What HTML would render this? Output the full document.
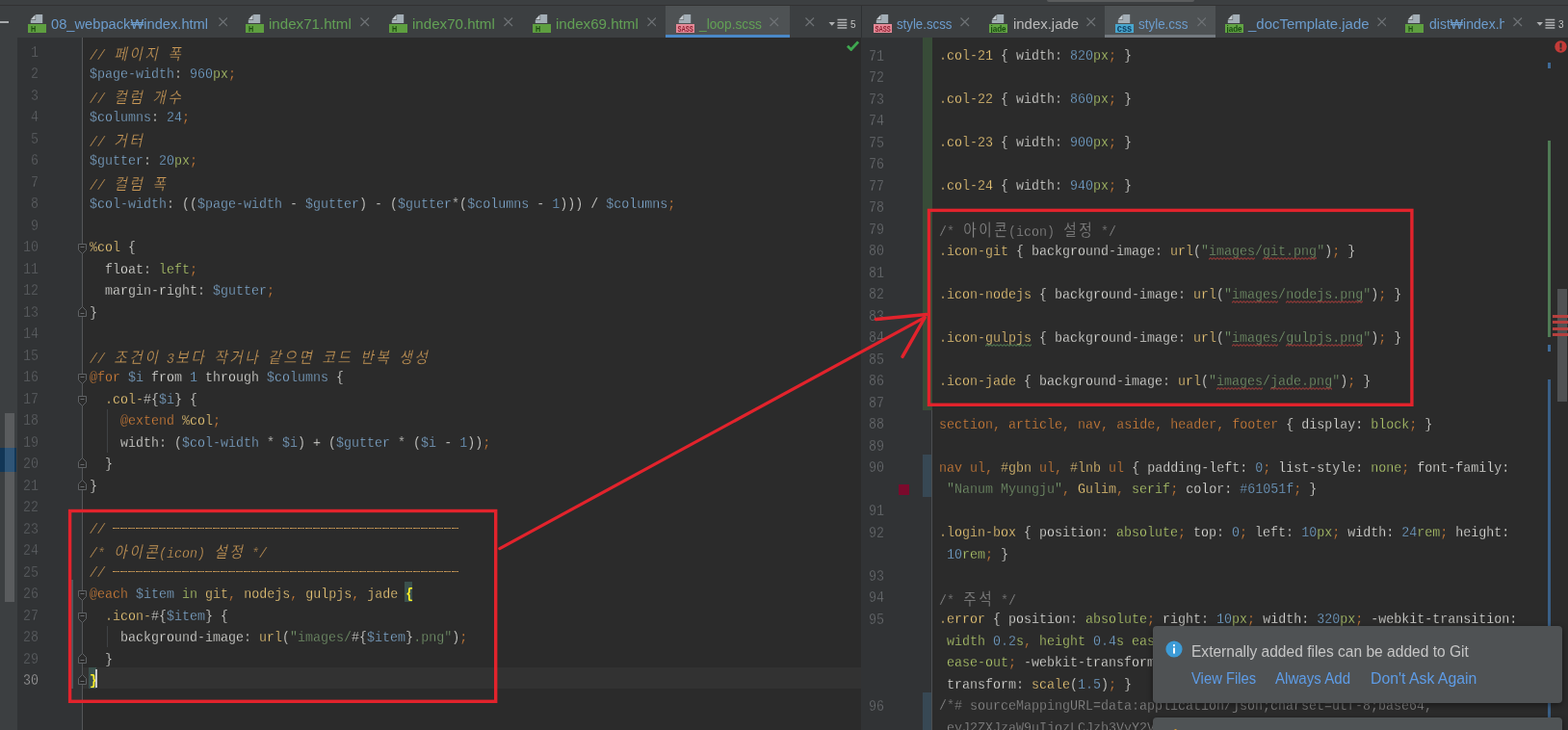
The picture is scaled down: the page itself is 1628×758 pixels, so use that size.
<!DOCTYPE html>
<html lang="ko"><head><meta charset="utf-8"><title>_loop.scss</title><style>
*{box-sizing:border-box}
html,body{margin:0;padding:0}
body{width:1628px;height:758px;overflow:hidden;position:relative;background:#2b2b2b;font-family:"Liberation Sans",sans-serif;font-size:15px;color:#bbb}
.abs{position:absolute}
#root{position:absolute;left:0;top:0;width:1628px;height:758px;will-change:transform}
#top{left:0;top:0;width:1628px;height:6px;background:#3c3f41;border-bottom:1px solid #323232}
.tabbar{top:6px;height:33px;background:#3c3f41}
.tab{position:absolute;top:0;height:33px;white-space:nowrap;line-height:33px}
.tab .t{position:absolute;top:0;line-height:38px;font-size:15px}
.tab .x{position:absolute;top:12px;width:10px;height:10px}
.tt{overflow:visible}
.blue{color:#6c9ccc}.green{color:#62a055}.wh{color:#bbbbbb}
.ed{background:#2b2b2b;overflow:hidden}
.gut{background:#313335}
.ln{position:absolute;color:#6c6f72;-webkit-text-stroke:0.35px #313335;font-family:"Liberation Mono",monospace;font-size:15px;line-height:22.5px;height:22.5px;text-align:right;transform:scale(0.8889,1.1);transform-origin:100% 60%;white-space:pre}
.cl{position:absolute;color:#e2e2de;-webkit-text-stroke:0.28px #2b2b2b;font-family:"Liberation Mono",monospace;font-size:15.0px;line-height:22.5px;height:22.5px;white-space:pre;transform:scaleX(0.8889);transform-origin:0 0}
.c{color:#c89857;font-style:italic}
.cg{color:#8c8c8c}
.dl{color:transparent;background:repeating-linear-gradient(90deg,#c89857 0,#c89857 7.875px,transparent 7.875px,transparent 9.000px) 0 6.2px/100% 1.2px no-repeat}
.v{color:#80aacf}.n{color:#74a3cc}.u{color:#b4cc6e}.p{color:#d4813a}.s{color:#f0cc7a}.k{color:#d4813a}.g{color:#b4cc6e}
.st{color:#76966c}.f{color:#f0cc7a}
.bh{color:#ffef28;font-weight:bold;-webkit-text-stroke:0}
.w,.wg{position:relative}
.zz{position:absolute;left:0;bottom:-0.5px;width:100%;height:3px}
.hg{display:inline-block;width:18px;text-align:center;font-family:"Liberation Sans","Noto Sans CJK KR",sans-serif;font-size:16.5px;font-style:normal;vertical-align:baseline;overflow:visible}
.hg.i{font-style:italic}
</style></head><body><div id="root">
<svg width="0" height="0" style="position:absolute"><defs>
<pattern id="zr" width="4" height="3" patternUnits="userSpaceOnUse"><path d="M0 2.4L2 0.6L4 2.4" stroke="#c0403c" stroke-width="1" fill="none"/></pattern>
<pattern id="zg" width="4" height="3" patternUnits="userSpaceOnUse"><path d="M0 2.4L2 0.6L4 2.4" stroke="#5f9460" stroke-width="1" fill="none"/></pattern>
</defs></svg>
<div id="top" class="abs"></div>
<div class="abs" style="left:1087px;top:0;width:153px;height:1.6px;background:#5a5c5d;border-radius:0 0 2px 2px"></div>
<div class="abs tabbar" style="left:0;width:894px">
<div class="abs" style="left:0;top:15.5px;width:8.5px;height:2px;background:#a8abad"></div>
<div class="abs" style="left:691px;top:0;width:128.5px;height:33px;background:#4e5254;border-bottom:3px solid #4a88c7"></div>
<div class="abs" style="left:29.0px;top:9px;width:19px;height:19px"><svg width="19" height="19" viewBox="0 0 19 19"><path d="M8.1 0H15.2V9H2.8V5.7H8.1Z" fill="#a3aeb6"/><path d="M7.6 0.3V5.2H2.9Z" fill="#c4cbd0"/><rect x="0" y="10" width="19" height="9" fill="#5e9f40"/><text x="2.9" y="17.8" font-family="Liberation Sans, sans-serif" font-weight="bold" font-size="8.8" fill="#1c4a12" textLength="5.2" lengthAdjust="spacingAndGlyphs">H</text></svg></div>
<svg class="abs tt" style="left:53.1px;top:8.6px" width="165.1" height="22" viewBox="0 0 165.1 22"><text x="0" y="15.4" font-family="Liberation Sans, sans-serif" font-size="15" fill="#6c9ccc" textLength="163.1" lengthAdjust="spacingAndGlyphs">08_webpack₩index.html</text></svg>
<svg class="abs" style="left:226.7px;top:12.4px" width="9.5" height="9.5" viewBox="0 0 10 10"><path d="M0.5 0.5L9.5 9.5M9.5 0.5L0.5 9.5" stroke="#6e7275" stroke-width="1.25" fill="none"/></svg>
<div class="abs" style="left:255.0px;top:9px;width:19px;height:19px"><svg width="19" height="19" viewBox="0 0 19 19"><path d="M8.1 0H15.2V9H2.8V5.7H8.1Z" fill="#a3aeb6"/><path d="M7.6 0.3V5.2H2.9Z" fill="#c4cbd0"/><rect x="0" y="10" width="19" height="9" fill="#5e9f40"/><text x="2.9" y="17.8" font-family="Liberation Sans, sans-serif" font-weight="bold" font-size="8.8" fill="#1c4a12" textLength="5.2" lengthAdjust="spacingAndGlyphs">H</text></svg></div>
<svg class="abs tt" style="left:279.2px;top:8.6px" width="87.8" height="22" viewBox="0 0 87.8 22"><text x="0" y="15.4" font-family="Liberation Sans, sans-serif" font-size="15" fill="#62a055" textLength="85.8" lengthAdjust="spacingAndGlyphs">index71.html</text></svg>
<svg class="abs" style="left:374.3px;top:12.4px" width="9.5" height="9.5" viewBox="0 0 10 10"><path d="M0.5 0.5L9.5 9.5M9.5 0.5L0.5 9.5" stroke="#6e7275" stroke-width="1.25" fill="none"/></svg>
<div class="abs" style="left:404.0px;top:9px;width:19px;height:19px"><svg width="19" height="19" viewBox="0 0 19 19"><path d="M8.1 0H15.2V9H2.8V5.7H8.1Z" fill="#a3aeb6"/><path d="M7.6 0.3V5.2H2.9Z" fill="#c4cbd0"/><rect x="0" y="10" width="19" height="9" fill="#5e9f40"/><text x="2.9" y="17.8" font-family="Liberation Sans, sans-serif" font-weight="bold" font-size="8.8" fill="#1c4a12" textLength="5.2" lengthAdjust="spacingAndGlyphs">H</text></svg></div>
<svg class="abs tt" style="left:428.2px;top:8.6px" width="87.8" height="22" viewBox="0 0 87.8 22"><text x="0" y="15.4" font-family="Liberation Sans, sans-serif" font-size="15" fill="#62a055" textLength="85.8" lengthAdjust="spacingAndGlyphs">index70.html</text></svg>
<svg class="abs" style="left:523.4px;top:12.4px" width="9.5" height="9.5" viewBox="0 0 10 10"><path d="M0.5 0.5L9.5 9.5M9.5 0.5L0.5 9.5" stroke="#6e7275" stroke-width="1.25" fill="none"/></svg>
<div class="abs" style="left:553.0px;top:9px;width:19px;height:19px"><svg width="19" height="19" viewBox="0 0 19 19"><path d="M8.1 0H15.2V9H2.8V5.7H8.1Z" fill="#a3aeb6"/><path d="M7.6 0.3V5.2H2.9Z" fill="#c4cbd0"/><rect x="0" y="10" width="19" height="9" fill="#5e9f40"/><text x="2.9" y="17.8" font-family="Liberation Sans, sans-serif" font-weight="bold" font-size="8.8" fill="#1c4a12" textLength="5.2" lengthAdjust="spacingAndGlyphs">H</text></svg></div>
<svg class="abs tt" style="left:577.4px;top:8.6px" width="87.8" height="22" viewBox="0 0 87.8 22"><text x="0" y="15.4" font-family="Liberation Sans, sans-serif" font-size="15" fill="#62a055" textLength="85.8" lengthAdjust="spacingAndGlyphs">index69.html</text></svg>
<svg class="abs" style="left:671.9px;top:12.4px" width="9.5" height="9.5" viewBox="0 0 10 10"><path d="M0.5 0.5L9.5 9.5M9.5 0.5L0.5 9.5" stroke="#6e7275" stroke-width="1.25" fill="none"/></svg>
<div class="abs" style="left:702.1px;top:9px;width:19px;height:19px"><svg width="19" height="19" viewBox="0 0 19 19"><path d="M8.1 0H15.2V9H2.8V5.7H8.1Z" fill="#a3aeb6"/><path d="M7.6 0.3V5.2H2.9Z" fill="#c4cbd0"/><rect x="0" y="10" width="19" height="9" fill="#e58a97"/><text x="1.4" y="17.8" font-family="Liberation Sans, sans-serif" font-weight="bold" font-size="8.2" fill="#8a1a2c" textLength="16.4" lengthAdjust="spacingAndGlyphs">SASS</text></svg></div>
<svg class="abs tt" style="left:726.2px;top:8.6px" width="67.0" height="22" viewBox="0 0 67.0 22"><text x="0" y="15.4" font-family="Liberation Sans, sans-serif" font-size="15" fill="#62a055" textLength="65.0" lengthAdjust="spacingAndGlyphs">_loop.scss</text></svg>
<svg class="abs" style="left:799.3px;top:12.4px" width="9.5" height="9.5" viewBox="0 0 10 10"><path d="M0.5 0.5L9.5 9.5M9.5 0.5L0.5 9.5" stroke="#6e7275" stroke-width="1.25" fill="none"/></svg>
<svg class="abs" style="left:836.4px;top:12.4px" width="9.5" height="9.5" viewBox="0 0 10 10"><path d="M0.5 0.5L9.5 9.5M9.5 0.5L0.5 9.5" stroke="#6e7275" stroke-width="1.25" fill="none"/></svg>
<svg class="abs" style="left:859.5px;top:11.6px" width="34" height="14" viewBox="0 0 34 14"><path d="M0.5 5H7L3.8 8.8Z" fill="#afb1b3"/><path d="M9.5 2.6H19.3M9.5 5.4H19.3M9.5 8.2H19.3M9.5 11H19.3" stroke="#afb1b3" stroke-width="1.5"/><text x="23" y="11.2" font-family="Liberation Sans, sans-serif" font-size="10" fill="#c4c4c4">5</text></svg>
</div>
<div class="abs tabbar" style="left:894px;width:734px">
<div class="abs" style="left:252.5px;top:0;width:115px;height:33px;background:#4e5254;border-bottom:3px solid #747a80"></div>
<div class="abs" style="left:13.0px;top:9px;width:19px;height:19px"><svg width="19" height="19" viewBox="0 0 19 19"><path d="M8.1 0H15.2V9H2.8V5.7H8.1Z" fill="#a3aeb6"/><path d="M7.6 0.3V5.2H2.9Z" fill="#c4cbd0"/><rect x="0" y="10" width="19" height="9" fill="#e58a97"/><text x="1.4" y="17.8" font-family="Liberation Sans, sans-serif" font-weight="bold" font-size="8.2" fill="#8a1a2c" textLength="16.4" lengthAdjust="spacingAndGlyphs">SASS</text></svg></div>
<svg class="abs tt" style="left:37.4px;top:8.6px" width="59.4" height="22" viewBox="0 0 59.4 22"><text x="0" y="15.4" font-family="Liberation Sans, sans-serif" font-size="15" fill="#6c9ccc" textLength="57.4" lengthAdjust="spacingAndGlyphs">style.scss</text></svg>
<svg class="abs" style="left:103.3px;top:12.4px" width="9.5" height="9.5" viewBox="0 0 10 10"><path d="M0.5 0.5L9.5 9.5M9.5 0.5L0.5 9.5" stroke="#6e7275" stroke-width="1.25" fill="none"/></svg>
<div class="abs" style="left:133.0px;top:9px;width:19px;height:19px"><svg width="19" height="19" viewBox="0 0 19 19"><path d="M8.1 0H15.2V9H2.8V5.7H8.1Z" fill="#a3aeb6"/><path d="M7.6 0.3V5.2H2.9Z" fill="#c4cbd0"/><rect x="0" y="10" width="19" height="9" fill="#62a444"/><text x="1.4" y="17.8" font-family="Liberation Sans, sans-serif" font-weight="bold" font-size="9.6" fill="#174a10" textLength="16.2" lengthAdjust="spacingAndGlyphs">jade</text></svg></div>
<svg class="abs tt" style="left:157.5px;top:8.6px" width="70.1" height="22" viewBox="0 0 70.1 22"><text x="0" y="15.4" font-family="Liberation Sans, sans-serif" font-size="15" fill="#bbbbbb" textLength="68.1" lengthAdjust="spacingAndGlyphs">index.jade</text></svg>
<svg class="abs" style="left:234.2px;top:12.4px" width="9.5" height="9.5" viewBox="0 0 10 10"><path d="M0.5 0.5L9.5 9.5M9.5 0.5L0.5 9.5" stroke="#6e7275" stroke-width="1.25" fill="none"/></svg>
<div class="abs" style="left:264.0px;top:9px;width:19px;height:19px"><svg width="19" height="19" viewBox="0 0 19 19"><path d="M8.1 0H15.2V9H2.8V5.7H8.1Z" fill="#a3aeb6"/><path d="M7.6 0.3V5.2H2.9Z" fill="#c4cbd0"/><rect x="0" y="10" width="19" height="9" fill="#49a7cf"/><text x="1.8" y="17.8" font-family="Liberation Sans, sans-serif" font-weight="bold" font-size="10.4" fill="#0d3b5e" textLength="15.4" lengthAdjust="spacingAndGlyphs">css</text></svg></div>
<svg class="abs tt" style="left:288.3px;top:8.6px" width="53.5" height="22" viewBox="0 0 53.5 22"><text x="0" y="15.4" font-family="Liberation Sans, sans-serif" font-size="15" fill="#6c9ccc" textLength="51.5" lengthAdjust="spacingAndGlyphs">style.css</text></svg>
<svg class="abs" style="left:348.6px;top:12.4px" width="9.5" height="9.5" viewBox="0 0 10 10"><path d="M0.5 0.5L9.5 9.5M9.5 0.5L0.5 9.5" stroke="#6e7275" stroke-width="1.25" fill="none"/></svg>
<div class="abs" style="left:377.7px;top:9px;width:19px;height:19px"><svg width="19" height="19" viewBox="0 0 19 19"><path d="M8.1 0H15.2V9H2.8V5.7H8.1Z" fill="#a3aeb6"/><path d="M7.6 0.3V5.2H2.9Z" fill="#c4cbd0"/><rect x="0" y="10" width="19" height="9" fill="#62a444"/><text x="1.4" y="17.8" font-family="Liberation Sans, sans-serif" font-weight="bold" font-size="9.6" fill="#174a10" textLength="16.2" lengthAdjust="spacingAndGlyphs">jade</text></svg></div>
<svg class="abs tt" style="left:402.0px;top:8.6px" width="127.6" height="22" viewBox="0 0 127.6 22"><text x="0" y="15.4" font-family="Liberation Sans, sans-serif" font-size="15" fill="#6c9ccc" textLength="125.6" lengthAdjust="spacingAndGlyphs">_docTemplate.jade</text></svg>
<svg class="abs" style="left:535.6px;top:12.4px" width="9.5" height="9.5" viewBox="0 0 10 10"><path d="M0.5 0.5L9.5 9.5M9.5 0.5L0.5 9.5" stroke="#6e7275" stroke-width="1.25" fill="none"/></svg>
<div class="abs" style="left:565.2px;top:9px;width:19px;height:19px"><svg width="19" height="19" viewBox="0 0 19 19"><path d="M8.1 0H15.2V9H2.8V5.7H8.1Z" fill="#a3aeb6"/><path d="M7.6 0.3V5.2H2.9Z" fill="#c4cbd0"/><rect x="0" y="10" width="19" height="9" fill="#5e9f40"/><text x="2.9" y="17.8" font-family="Liberation Sans, sans-serif" font-weight="bold" font-size="8.8" fill="#1c4a12" textLength="5.2" lengthAdjust="spacingAndGlyphs">H</text></svg></div>
<div class="abs" style="left:589.0px;top:0;width:79.4px;height:33px;overflow:hidden"><svg class="abs tt" style="left:0.6px;top:8.6px" width="101.1" height="22" viewBox="0 0 101.1 22"><text x="0" y="15.4" font-family="Liberation Sans, sans-serif" font-size="15" fill="#6c9ccc" textLength="99.1" lengthAdjust="spacingAndGlyphs">dist₩index.html</text></svg></div>
<svg class="abs" style="left:677.3px;top:12.4px" width="9.5" height="9.5" viewBox="0 0 10 10"><path d="M0.5 0.5L9.5 9.5M9.5 0.5L0.5 9.5" stroke="#6e7275" stroke-width="1.25" fill="none"/></svg>
<svg class="abs" style="left:700.5px;top:11.6px" width="34" height="14" viewBox="0 0 34 14"><path d="M0.5 5H7L3.8 8.8Z" fill="#afb1b3"/><path d="M9.5 2.6H19.3M9.5 5.4H19.3M9.5 8.2H19.3M9.5 11H19.3" stroke="#afb1b3" stroke-width="1.5"/><text x="23" y="11.2" font-family="Liberation Sans, sans-serif" font-size="10" fill="#c4c4c4">3</text></svg>
</div>
<div class="abs" style="left:893.5px;top:6px;width:1px;height:33px;background:#2e3032"></div>
<div class="abs ed" style="left:0;top:39px;width:894px;height:719px">
<div class="abs" style="left:0;top:0;width:18px;height:719px;background:#3c3f41"></div>
<div class="abs" style="left:5px;top:390px;width:10px;height:196px;background:#5a5c5e"></div>
<div class="abs" style="left:0;top:426px;width:17px;height:25px;background:#123656"></div>
<div class="abs" style="left:5px;top:426px;width:10px;height:25px;background:#2f5577"></div>
<div class="abs gut" style="left:18px;top:0;width:68px;height:719px;border-right:1px solid #555759"></div>
<div class="abs" style="left:86px;top:654.10px;width:808px;height:22.00px;background:#323232"></div>
<div class="abs" style="left:92.0px;top:654.10px;width:7.6px;height:21.6px;background:#3b514d"></div>
<div class="abs" style="left:420.2px;top:564.50px;width:8px;height:21.4px;background:#3b514d"></div>
<div class="abs" style="left:74.3px;top:563px;width:2px;height:112.8px;background:#4b5b60"></div>
<div class="ln" style="right:854px;top:5.95px;color:#606366">1</div>
<div class="cl" style="left:92.6px;top:5.65px"><span class="c">// <span class="hg i">페</span><span class="hg i">이</span><span class="hg i">지</span> <span class="hg i">폭</span></span></div>
<div class="ln" style="right:854px;top:28.45px;color:#606366">2</div>
<div class="cl" style="left:92.6px;top:28.15px"><span class="v">$page-width</span>: <span class="n">960</span><span class="u">px</span><span class="p">;</span></div>
<div class="ln" style="right:854px;top:50.95px;color:#606366">3</div>
<div class="cl" style="left:92.6px;top:50.65px"><span class="c">// <span class="hg i">컬</span><span class="hg i">럼</span> <span class="hg i">개</span><span class="hg i">수</span></span></div>
<div class="ln" style="right:854px;top:73.45px;color:#606366">4</div>
<div class="cl" style="left:92.6px;top:73.15px"><span class="v">$columns</span>: <span class="n">24</span><span class="p">;</span></div>
<div class="ln" style="right:854px;top:95.95px;color:#606366">5</div>
<div class="cl" style="left:92.6px;top:95.65px"><span class="c">// <span class="hg i">거</span><span class="hg i">터</span></span></div>
<div class="ln" style="right:854px;top:118.45px;color:#606366">6</div>
<div class="cl" style="left:92.6px;top:118.15px"><span class="v">$gutter</span>: <span class="n">20</span><span class="u">px</span><span class="p">;</span></div>
<div class="ln" style="right:854px;top:140.95px;color:#606366">7</div>
<div class="cl" style="left:92.6px;top:140.65px"><span class="c">// <span class="hg i">컬</span><span class="hg i">럼</span> <span class="hg i">폭</span></span></div>
<div class="ln" style="right:854px;top:163.45px;color:#606366">8</div>
<div class="cl" style="left:92.6px;top:163.15px"><span class="v">$col-width</span>: ((<span class="v">$page-width</span> - <span class="v">$gutter</span>) - (<span class="v">$gutter</span>*(<span class="v">$columns</span> - <span class="n">1</span>))) / <span class="v">$columns</span><span class="p">;</span></div>
<div class="ln" style="right:854px;top:185.95px;color:#606366">9</div>
<div class="ln" style="right:854px;top:208.45px;color:#606366">10</div>
<div class="cl" style="left:92.6px;top:208.15px"><span class="s">%col</span> {</div>
<div class="ln" style="right:854px;top:230.95px;color:#606366">11</div>
<div class="cl" style="left:92.6px;top:230.65px">  float: <span class="g">left</span><span class="p">;</span></div>
<div class="ln" style="right:854px;top:253.45px;color:#606366">12</div>
<div class="cl" style="left:92.6px;top:253.15px">  margin-right: <span class="v">$gutter</span><span class="p">;</span></div>
<div class="ln" style="right:854px;top:275.95px;color:#606366">13</div>
<div class="cl" style="left:92.6px;top:275.65px">}</div>
<div class="ln" style="right:854px;top:298.45px;color:#606366">14</div>
<div class="ln" style="right:854px;top:320.95px;color:#606366">15</div>
<div class="cl" style="left:92.6px;top:320.65px"><span class="c">// <span class="hg i">조</span><span class="hg i">건</span><span class="hg i">이</span> 3<span class="hg i">보</span><span class="hg i">다</span> <span class="hg i">작</span><span class="hg i">거</span><span class="hg i">나</span> <span class="hg i">같</span><span class="hg i">으</span><span class="hg i">면</span> <span class="hg i">코</span><span class="hg i">드</span> <span class="hg i">반</span><span class="hg i">복</span> <span class="hg i">생</span><span class="hg i">성</span></span></div>
<div class="ln" style="right:854px;top:343.45px;color:#606366">16</div>
<div class="cl" style="left:92.6px;top:343.15px"><span class="k">@for</span> <span class="v">$i</span> from <span class="n">1</span> through <span class="v">$columns</span> {</div>
<div class="ln" style="right:854px;top:365.95px;color:#606366">17</div>
<div class="cl" style="left:92.6px;top:365.65px">  <span class="s">.col-</span>#{<span class="v">$i</span>} {</div>
<div class="ln" style="right:854px;top:388.45px;color:#606366">18</div>
<div class="cl" style="left:92.6px;top:388.15px">    <span class="k">@extend</span> <span class="s">%col</span><span class="p">;</span></div>
<div class="ln" style="right:854px;top:410.95px;color:#606366">19</div>
<div class="cl" style="left:92.6px;top:410.65px">    width: (<span class="v">$col-width</span> * <span class="v">$i</span>) + (<span class="v">$gutter</span> * (<span class="v">$i</span> - <span class="n">1</span>))<span class="p">;</span></div>
<div class="ln" style="right:854px;top:433.45px;color:#606366">20</div>
<div class="cl" style="left:92.6px;top:433.15px">  }</div>
<div class="ln" style="right:854px;top:455.95px;color:#606366">21</div>
<div class="cl" style="left:92.6px;top:455.65px">}</div>
<div class="ln" style="right:854px;top:478.45px;color:#606366">22</div>
<div class="ln" style="right:854px;top:500.95px;color:#606366">23</div>
<div class="cl" style="left:92.6px;top:500.65px"><span class="c">// </span><span class="c dl">---------------------------------------------</span></div>
<div class="ln" style="right:854px;top:523.45px;color:#606366">24</div>
<div class="cl" style="left:92.6px;top:523.15px"><span class="c">/* <span class="hg i">아</span><span class="hg i">이</span><span class="hg i">콘</span>(icon) <span class="hg i">설</span><span class="hg i">정</span> */</span></div>
<div class="ln" style="right:854px;top:545.95px;color:#606366">25</div>
<div class="cl" style="left:92.6px;top:545.65px"><span class="c">// </span><span class="c dl">---------------------------------------------</span></div>
<div class="ln" style="right:854px;top:568.45px;color:#606366">26</div>
<div class="cl" style="left:92.6px;top:568.15px"><span class="k">@each</span> <span class="v">$item</span> <span class="g">in</span> <span class="s">git</span><span class="p">,</span> <span class="s">nodejs</span><span class="p">,</span> <span class="s">gulpjs</span><span class="p">,</span> <span class="s">jade</span> <span class="bh">{</span></div>
<div class="ln" style="right:854px;top:590.95px;color:#606366">27</div>
<div class="cl" style="left:92.6px;top:590.65px">  <span class="s">.icon-</span>#{<span class="v">$item</span>} {</div>
<div class="ln" style="right:854px;top:613.45px;color:#606366">28</div>
<div class="cl" style="left:92.6px;top:613.15px">    background-image: <span class="f">url</span>(<span class="st">"images/</span>#{<span class="v">$item</span>}<span class="st">.png"</span>)<span class="p">;</span></div>
<div class="ln" style="right:854px;top:635.95px;color:#606366">29</div>
<div class="cl" style="left:92.6px;top:635.65px">  }</div>
<div class="ln" style="right:854px;top:658.45px;color:#a4a3a3">30</div>
<div class="cl" style="left:92.6px;top:658.15px"><span class="bh">}</span></div>
<div class="abs" style="left:99.2px;top:655.90px;width:2px;height:19px;background:#c8c8c8"></div>
<div class="abs" style="left:111px;top:386.4px;width:1px;height:45.0px;background:#3f4244"></div>
<div class="abs" style="left:111px;top:611.4px;width:1px;height:22.0px;background:#3f4244"></div>
<svg class="abs" style="left:81.0px;top:214.1px" width="9" height="11" viewBox="0 0 9 11"><path d="M0.5 0.5H8.5V6.5L4.5 10.5L0.5 6.5Z" fill="#2b2b2b" stroke="#5f6265"/><path d="M2.5 3.5 H6.5" stroke="#6a6d70"/></svg>
<svg class="abs" style="left:81.0px;top:278.7px" width="9" height="11" viewBox="0 0 9 11"><path d="M0.5 10.5H8.5V4.5L4.5 0.5L0.5 4.5Z" fill="#2b2b2b" stroke="#5f6265"/><path d="M2.5 7.5 H6.5" stroke="#6a6d70"/></svg>
<svg class="abs" style="left:81.0px;top:349.1px" width="9" height="11" viewBox="0 0 9 11"><path d="M0.5 0.5H8.5V6.5L4.5 10.5L0.5 6.5Z" fill="#2b2b2b" stroke="#5f6265"/><path d="M2.5 3.5 H6.5" stroke="#6a6d70"/></svg>
<svg class="abs" style="left:81.0px;top:371.6px" width="9" height="11" viewBox="0 0 9 11"><path d="M0.5 0.5H8.5V6.5L4.5 10.5L0.5 6.5Z" fill="#2b2b2b" stroke="#5f6265"/><path d="M2.5 3.5 H6.5" stroke="#6a6d70"/></svg>
<svg class="abs" style="left:81.0px;top:436.2px" width="9" height="11" viewBox="0 0 9 11"><path d="M0.5 10.5H8.5V4.5L4.5 0.5L0.5 4.5Z" fill="#2b2b2b" stroke="#5f6265"/><path d="M2.5 7.5 H6.5" stroke="#6a6d70"/></svg>
<svg class="abs" style="left:81.0px;top:458.7px" width="9" height="11" viewBox="0 0 9 11"><path d="M0.5 10.5H8.5V4.5L4.5 0.5L0.5 4.5Z" fill="#2b2b2b" stroke="#5f6265"/><path d="M2.5 7.5 H6.5" stroke="#6a6d70"/></svg>
<svg class="abs" style="left:81.0px;top:574.1px" width="9" height="11" viewBox="0 0 9 11"><path d="M0.5 0.5H8.5V6.5L4.5 10.5L0.5 6.5Z" fill="#2b2b2b" stroke="#5f6265"/><path d="M2.5 3.5 H6.5" stroke="#6a6d70"/></svg>
<svg class="abs" style="left:81.0px;top:596.6px" width="9" height="11" viewBox="0 0 9 11"><path d="M0.5 0.5H8.5V6.5L4.5 10.5L0.5 6.5Z" fill="#2b2b2b" stroke="#5f6265"/><path d="M2.5 3.5 H6.5" stroke="#6a6d70"/></svg>
<svg class="abs" style="left:81.0px;top:638.7px" width="9" height="11" viewBox="0 0 9 11"><path d="M0.5 10.5H8.5V4.5L4.5 0.5L0.5 4.5Z" fill="#2b2b2b" stroke="#5f6265"/><path d="M2.5 7.5 H6.5" stroke="#6a6d70"/></svg>
<svg class="abs" style="left:81.0px;top:661.2px" width="9" height="11" viewBox="0 0 9 11"><path d="M0.5 10.5H8.5V4.5L4.5 0.5L0.5 4.5Z" fill="#2b2b2b" stroke="#5f6265"/><path d="M2.5 7.5 H6.5" stroke="#6a6d70"/></svg>
</div>
<div class="abs ed" style="left:894px;top:39px;width:734px;height:719px">
<div class="abs gut" style="left:0;top:0;width:74px;height:719px"></div>
<div class="abs" style="left:64px;top:0;width:10px;height:387px;background:#384c38"></div>
<div class="abs" style="left:64px;top:432.8px;width:10px;height:44.2px;background:#374854"></div>
<div class="abs" style="left:64px;top:680.3px;width:10px;height:45.0px;background:#374854"></div>
<div class="abs" style="left:73px;top:387px;width:1px;height:332px;background:#4d4f51"></div>
<div class="abs" style="left:39px;top:464.0px;width:11px;height:11px;background:#7b0a2c"></div>
<div class="ln" style="right:710px;top:9.65px">71</div>
<div class="cl" style="left:81px;top:9.35px"><span class="s">.col-21</span> { width: <span class="n">820</span><span class="u">px</span><span class="p">;</span> }</div>
<div class="ln" style="right:710px;top:32.15px">72</div>
<div class="ln" style="right:710px;top:54.65px">73</div>
<div class="cl" style="left:81px;top:54.35px"><span class="s">.col-22</span> { width: <span class="n">860</span><span class="u">px</span><span class="p">;</span> }</div>
<div class="ln" style="right:710px;top:77.15px">74</div>
<div class="ln" style="right:710px;top:99.65px">75</div>
<div class="cl" style="left:81px;top:99.35px"><span class="s">.col-23</span> { width: <span class="n">900</span><span class="u">px</span><span class="p">;</span> }</div>
<div class="ln" style="right:710px;top:122.15px">76</div>
<div class="ln" style="right:710px;top:144.65px">77</div>
<div class="cl" style="left:81px;top:144.35px"><span class="s">.col-24</span> { width: <span class="n">940</span><span class="u">px</span><span class="p">;</span> }</div>
<div class="ln" style="right:710px;top:167.15px">78</div>
<div class="ln" style="right:710px;top:189.65px">79</div>
<div class="cl" style="left:81px;top:189.35px"><span class="cg">/* <span class="hg">아</span><span class="hg">이</span><span class="hg">콘</span>(icon) <span class="hg">설</span><span class="hg">정</span> */</span></div>
<div class="ln" style="right:710px;top:212.15px">80</div>
<div class="cl" style="left:81px;top:211.85px"><span class="s">.icon-git</span> { background-image: <span class="f">url</span>(<span class="st">"</span><span class="st w">images<svg class="zz" aria-hidden="true"><rect width="100%" height="3" fill="url(#zr)"/></svg></span><span class="st">/</span><span class="st w">git.png<svg class="zz" aria-hidden="true"><rect width="100%" height="3" fill="url(#zr)"/></svg></span><span class="st">"</span>)<span class="p">;</span> }</div>
<div class="ln" style="right:710px;top:234.65px">81</div>
<div class="ln" style="right:710px;top:257.15px">82</div>
<div class="cl" style="left:81px;top:256.85px"><span class="s">.icon-nodejs</span> { background-image: <span class="f">url</span>(<span class="st">"</span><span class="st w">images<svg class="zz" aria-hidden="true"><rect width="100%" height="3" fill="url(#zr)"/></svg></span><span class="st">/</span><span class="st w">nodejs.png<svg class="zz" aria-hidden="true"><rect width="100%" height="3" fill="url(#zr)"/></svg></span><span class="st">"</span>)<span class="p">;</span> }</div>
<div class="ln" style="right:710px;top:279.65px">83</div>
<div class="ln" style="right:710px;top:302.15px">84</div>
<div class="cl" style="left:81px;top:301.85px"><span class="s">.icon-</span><span class="s wg">gulpjs<svg class="zz" aria-hidden="true"><rect width="100%" height="3" fill="url(#zg)"/></svg></span> { background-image: <span class="f">url</span>(<span class="st">"</span><span class="st w">images<svg class="zz" aria-hidden="true"><rect width="100%" height="3" fill="url(#zr)"/></svg></span><span class="st">/</span><span class="st w">gulpjs.png<svg class="zz" aria-hidden="true"><rect width="100%" height="3" fill="url(#zr)"/></svg></span><span class="st">"</span>)<span class="p">;</span> }</div>
<div class="ln" style="right:710px;top:324.65px">85</div>
<div class="ln" style="right:710px;top:347.15px">86</div>
<div class="cl" style="left:81px;top:346.85px"><span class="s">.icon-jade</span> { background-image: <span class="f">url</span>(<span class="st">"</span><span class="st w">images<svg class="zz" aria-hidden="true"><rect width="100%" height="3" fill="url(#zr)"/></svg></span><span class="st">/</span><span class="st w">jade.png<svg class="zz" aria-hidden="true"><rect width="100%" height="3" fill="url(#zr)"/></svg></span><span class="st">"</span>)<span class="p">;</span> }</div>
<div class="ln" style="right:710px;top:369.65px">87</div>
<div class="ln" style="right:710px;top:392.15px">88</div>
<div class="cl" style="left:81px;top:391.85px"><span class="k">section</span><span class="p">,</span> <span class="k">article</span><span class="p">,</span> <span class="k">nav</span><span class="p">,</span> <span class="k">aside</span><span class="p">,</span> <span class="k">header</span><span class="p">,</span> <span class="k">footer</span> { display: <span class="g">block</span><span class="p">;</span> }</div>
<div class="ln" style="right:710px;top:414.65px">89</div>
<div class="ln" style="right:710px;top:437.15px">90</div>
<div class="cl" style="left:81px;top:436.85px"><span class="k">nav ul</span><span class="p">,</span> <span class="s">#gbn</span><span class="k"> ul</span><span class="p">,</span> <span class="s">#lnb</span><span class="k"> ul</span> { padding-left: <span class="n">0</span><span class="p">;</span> list-style: <span class="g">none</span><span class="p">;</span> font-family:</div>
<div class="cl" style="left:81px;top:459.35px"> <span class="st">"Nanum Myungju"</span><span class="p">,</span> <span class="s">Gulim</span><span class="p">,</span> <span class="g">serif</span><span class="p">;</span> color: <span class="n">#61051f</span><span class="p">;</span> }</div>
<div class="ln" style="right:710px;top:482.15px">91</div>
<div class="ln" style="right:710px;top:504.65px">92</div>
<div class="cl" style="left:81px;top:504.35px"><span class="s">.login-box</span> { position: <span class="g">absolute</span><span class="p">;</span> top: <span class="n">0</span><span class="p">;</span> left: <span class="n">10</span><span class="u">px</span><span class="p">;</span> width: <span class="n">24</span><span class="u">rem</span><span class="p">;</span> height:</div>
<div class="cl" style="left:81px;top:526.85px"> <span class="n">10</span><span class="u">rem</span><span class="p">;</span> }</div>
<div class="ln" style="right:710px;top:549.65px">93</div>
<div class="ln" style="right:710px;top:572.15px">94</div>
<div class="cl" style="left:81px;top:571.85px"><span class="cg">/* <span class="hg">주</span><span class="hg">석</span> */</span></div>
<div class="ln" style="right:710px;top:594.65px">95</div>
<div class="cl" style="left:81px;top:594.35px"><span class="s">.error</span> { position: <span class="g">absolute</span><span class="p">;</span> right: <span class="n">10</span><span class="u">px</span><span class="p">;</span> width: <span class="n">320</span><span class="u">px</span><span class="p">;</span> -webkit-transition:</div>
<div class="cl" style="left:81px;top:616.85px"> <span class="g">width </span><span class="n">0.2</span><span class="u">s</span><span class="p">,</span><span class="g"> height </span><span class="n">0.4</span><span class="u">s</span><span class="g"> ease-out</span><span class="p">,</span> -webkit-transform <span class="n">0.4</span><span class="u">s</span></div>
<div class="cl" style="left:81px;top:639.35px"> <span class="g">ease-out</span><span class="p">;</span> -webkit-transform: <span class="f">scale</span>(<span class="n">1.5</span>)<span class="p">;</span></div>
<div class="cl" style="left:81px;top:661.85px"> transform: <span class="f">scale</span>(<span class="n">1.5</span>)<span class="p">;</span> }</div>
<div class="ln" style="right:710px;top:684.65px">96</div>
<div class="cl" style="left:81px;top:684.35px"><span class="cg">/*# sourceMappingURL=data</span><span class="cg">:application/json;charset=utf-8;base</span><span class="cg">64,</span></div>
<div class="cl" style="left:81px;top:706.85px"><span class="cg"> eyJ2ZXJzaW9uIjozLCJzb3VyY2VzIjpbInN0eWxlLmNzcyJdLCJuYW1lcyI6W10sIm1hcHBpbmdz</span></div>
<div class="abs" style="left:723px;top:261px;width:10px;height:117px;background:#4f5153"></div>
<div class="abs" style="left:713px;top:107px;width:3px;height:204px;background:#4f7a55"></div>
<div class="abs" style="left:718px;top:288px;width:16px;height:3px;background:#b5403e"></div>
<div class="abs" style="left:718px;top:294.3px;width:16px;height:3px;background:#b5403e"></div>
<div class="abs" style="left:718px;top:300.6px;width:16px;height:3px;background:#b5403e"></div>
<div class="abs" style="left:718px;top:306.9px;width:16px;height:3px;background:#b5403e"></div>
<div class="abs" style="left:713px;top:26px;width:3px;height:6px;background:#3f6a96"></div>
<div class="abs" style="left:713px;top:319px;width:3px;height:7px;background:#3f6a96"></div>
<div class="abs" style="left:713px;top:355px;width:3px;height:364px;background:#3a5f86"></div>
<svg class="abs" style="left:720px;top:3.2px" width="13" height="13" viewBox="0 0 13 13"><circle cx="6.5" cy="6.5" r="6.2" fill="#c33b38"/><rect x="5.5" y="2.6" width="2" height="5" fill="#2b2b2b"/><rect x="5.5" y="8.6" width="2" height="2" fill="#2b2b2b"/></svg>
</div>
<svg class="abs" style="left:879.1px;top:42px" width="13" height="11.2" viewBox="0 0 14 12"><path d="M1 6.2L5 10.2L13 1.5" stroke="#3fa850" stroke-width="3" fill="none"/></svg>
<svg class="abs" style="left:0;top:0;pointer-events:none" width="1628" height="758" viewBox="0 0 1628 758" fill="none" stroke="#e2232c" stroke-width="3.4" stroke-linecap="round"><rect x="72.6" y="530.5" width="442.1" height="197.8" stroke-linecap="butt"/><rect x="964.5" y="218.4" width="501.4" height="201.9" stroke-linecap="butt"/><path d="M518.8 569.6L960 329.6" stroke-width="3.2"/><path d="M909.5 331.4L962 326.6M937 370.3L960 330" stroke-width="3.5"/></svg>
<div class="abs" style="left:1197px;top:650px;width:425px;height:80px;background:#4f5254;border-radius:4px;box-shadow:0 2px 6px rgba(0,0,0,.45)"><svg class="abs" style="left:12.5px;top:15px" width="18" height="18" viewBox="0 0 18 18"><circle cx="9" cy="9" r="8.6" fill="#3d9bd6"/><rect x="8" y="7.600" width="2" height="6" fill="#fff"/><rect x="8" y="4.200" width="2" height="2" fill="#fff"/></svg><svg class="abs" style="left:40.2px;top:17px;overflow:visible" width="289.8" height="22" viewBox="0 0 289.8 22"><text x="0" y="15.3" font-family="Liberation Sans, sans-serif" font-size="15.6" fill="#c6c6c6" textLength="287.8" lengthAdjust="spacingAndGlyphs">Externally added files can be added to Git</text></svg><svg class="abs" style="left:40.2px;top:44.5px;overflow:visible" width="69.2" height="22" viewBox="0 0 69.2 22"><text x="0" y="15.3" font-family="Liberation Sans, sans-serif" font-size="15.6" fill="#5e9ce6" textLength="67.2" lengthAdjust="spacingAndGlyphs">View Files</text></svg><svg class="abs" style="left:127.2px;top:44.5px;overflow:visible" width="80.2" height="22" viewBox="0 0 80.2 22"><text x="0" y="15.3" font-family="Liberation Sans, sans-serif" font-size="15.6" fill="#5e9ce6" textLength="78.2" lengthAdjust="spacingAndGlyphs">Always Add</text></svg><svg class="abs" style="left:226.3px;top:44.5px;overflow:visible" width="112.3" height="22" viewBox="0 0 112.3 22"><text x="0" y="15.3" font-family="Liberation Sans, sans-serif" font-size="15.6" fill="#5e9ce6" textLength="110.3" lengthAdjust="spacingAndGlyphs">Don't Ask Again</text></svg></div>
<div class="abs" style="left:1197px;top:745px;width:425px;height:40px;background:#4f5355;border-radius:4px;box-shadow:0 2px 6px rgba(0,0,0,.45)"><div class="abs" style="left:21.5px;top:11.5px;width:3px;height:3px;background:#e0a030;border-radius:2px"></div></div>
</div></body></html>
